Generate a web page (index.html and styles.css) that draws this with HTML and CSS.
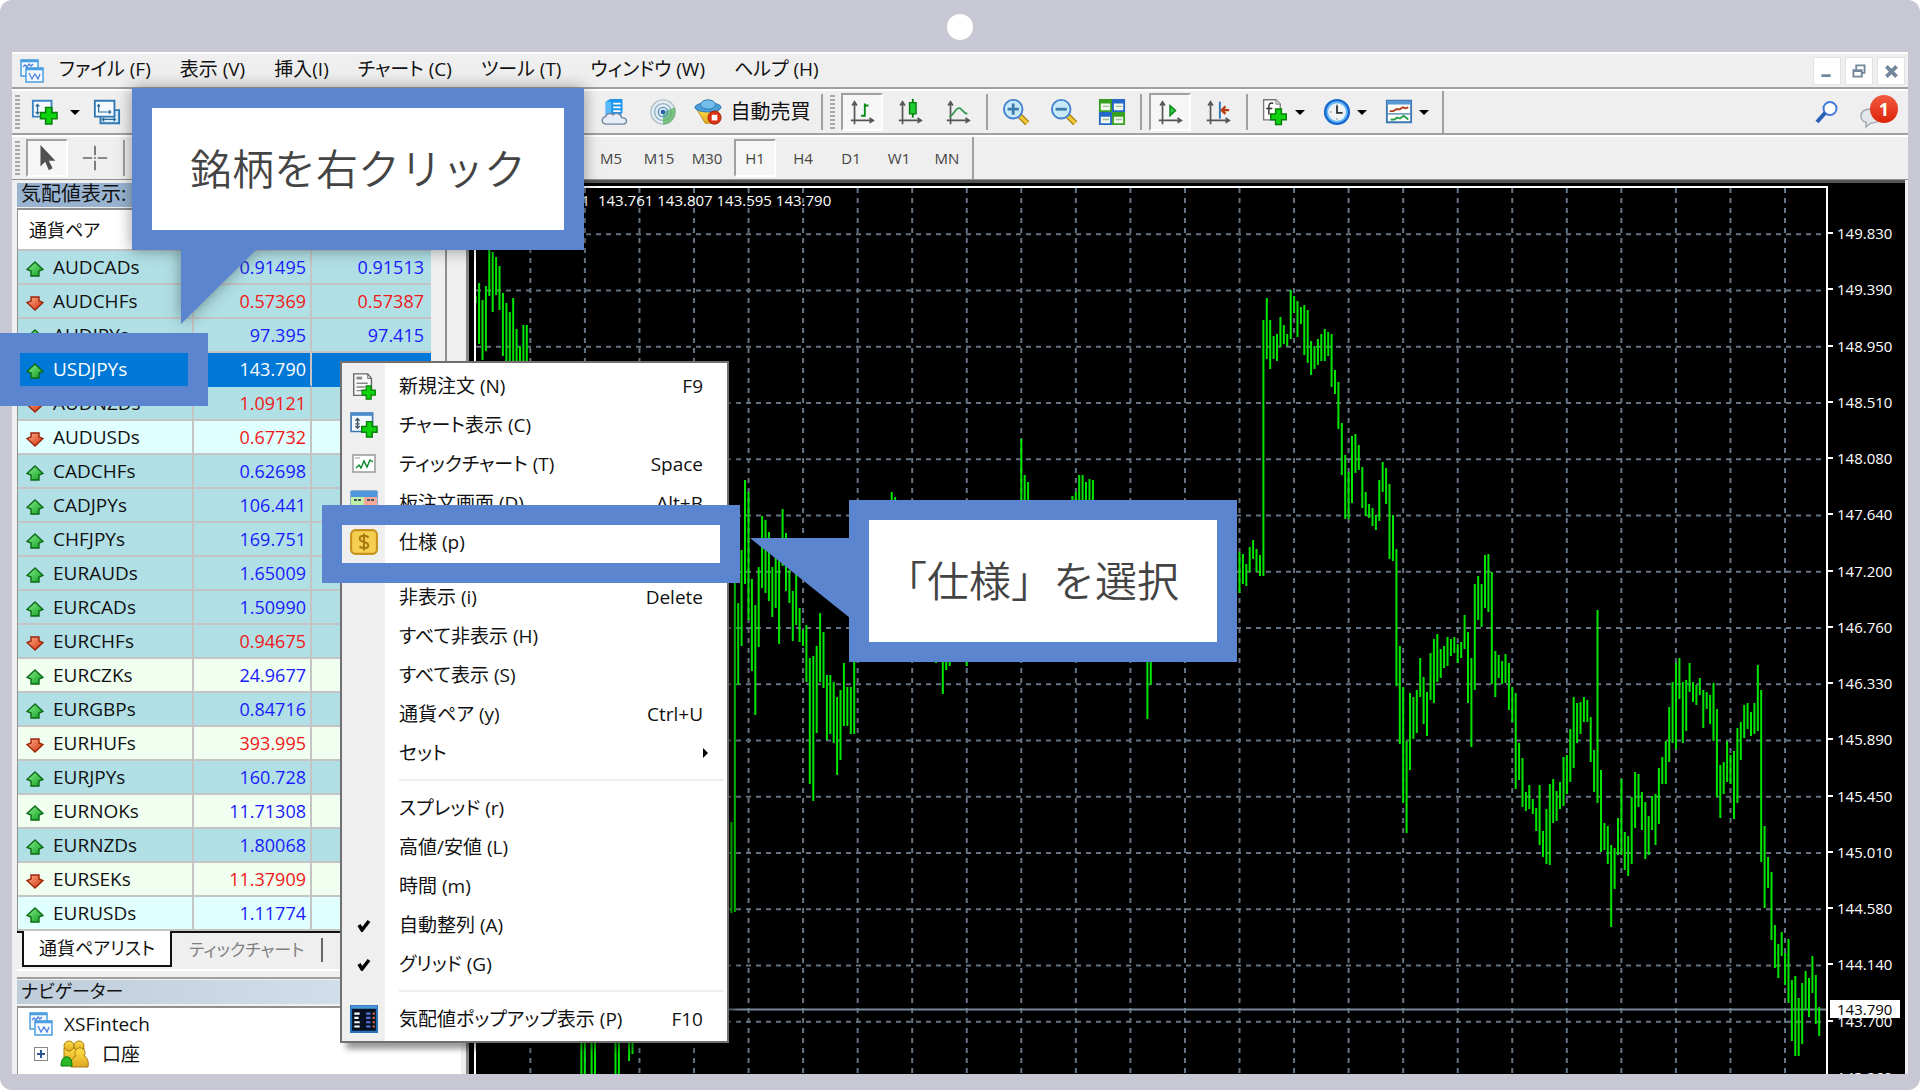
FILE: index.html
```html
<!DOCTYPE html>
<html lang="ja">
<head>
<meta charset="utf-8">
<title>XSFintech</title>
<link rel="stylesheet" href="styles.css">
</head>
<body>
<svg class="sprite" aria-hidden="true">
  <defs>
    <linearGradient id="g-green" x1="0" y1="0" x2="1" y2="1"><stop offset="0" stop-color="#8df08d"/><stop offset="1" stop-color="#0a9a1e"/></linearGradient>
    <linearGradient id="g-red" x1="0" y1="0" x2="1" y2="1"><stop offset="0" stop-color="#ffb08a"/><stop offset="1" stop-color="#cf2d08"/></linearGradient>
    <linearGradient id="g-gold" x1="0" y1="0" x2="0" y2="1"><stop offset="0" stop-color="#ffe04a"/><stop offset="1" stop-color="#e0a820"/></linearGradient>
  </defs>
  <symbol id="i-plus" viewBox="0 0 18 18"><path d="M6 1h6v5h5v6h-5v5H6v-5H1V6h5z" fill="#0fd40f" stroke="#078007" stroke-width="1.5"/></symbol>
  <symbol id="i-up" viewBox="0 0 18 18"><path d="M9 2l8 7.500-4 1.500v5H5v-5L1 9.500z" fill="url(#g-green)" stroke="#0b6a14" stroke-width="1.400"/></symbol>
  <symbol id="i-down" viewBox="0 0 18 18"><path d="M9 16L1 8.500l4-1.500V3h8v4l4 1.500z" fill="url(#g-red)" stroke="#9b2408" stroke-width="1.400"/></symbol>
  <symbol id="i-app" viewBox="0 0 26 26"><g fill="#f3f9ff" stroke="#4a9fe0" stroke-width="1.500"><path d="M2 2h17v16H2z"/><path d="M2 3h17" stroke-width="2.500"/><path d="M7 10h17v14H7z"/><path d="M7 11h17" stroke-width="2.500"/></g><path d="M4 9l2-2 2 2 2-3 2 2 2-2M10 15l3 6 3-5 3 5 2-5" fill="none" stroke="#4c7fe0" stroke-width="1.300"/></symbol>
  <symbol id="i-newchart" viewBox="0 0 30 30"><path d="M2 3h20v17H2z" fill="#f4faff" stroke="#3c84c4" stroke-width="2"/><path d="M7 7v10M5 9l2-2 2 2M5 15l2 2 2-2" fill="none" stroke="#2d6a94" stroke-width="1.400"/><use href="#i-plus" x="9" y="8" width="20" height="22"/></symbol>
  <symbol id="i-profiles" viewBox="0 0 30 30"><path d="M8 13h20v14H8z" fill="#d7ecfb" stroke="#3078b4" stroke-width="2"/><path d="M2 3h21v17H2z" fill="#f4faff" stroke="#3078b4" stroke-width="2"/><path d="M6 7v8h13M4.500 9L6 7l1.500 2M17 13l2 2-2 2M10 23h14M12 21l-2 2 2 2M22 21l2 2-2 2" fill="none" stroke="#2d6a94" stroke-width="1.300"/></symbol>
  <symbol id="i-server" viewBox="0 0 30 30"><path d="M5 4l5-3h13v15l-4 3H5z" fill="#1c94ee"/><path d="M5 4h6v15H5z" fill="#58bafc"/><path d="M13 6h8M13 10h8M13 14h8" stroke="#fff" stroke-width="2"/><path d="M6 28c-6 0-6-7-1-8 1-4 6-4 8-2 3-3 9-1 9 3 7 0 7 7 1 7z" fill="#e6edf6" stroke="#72859f" stroke-width="1.500"/></symbol>
  <symbol id="i-signal" viewBox="0 0 30 30"><circle cx="15" cy="15" r="13" fill="#e6edf0" stroke="#aebfca" stroke-width="1.500"/><circle cx="15" cy="15" r="9" fill="none" stroke="#8fb0c8" stroke-width="1.500"/><path d="M15 15l13-5c2 10-4 18-13 19z" fill="#62b768" opacity=".8"/><circle cx="15" cy="15" r="5" fill="none" stroke="#5693cc" stroke-width="1.500"/><circle cx="15" cy="15" r="2.500" fill="#235fb4"/></symbol>
  <symbol id="i-auto" viewBox="0 0 30 30"><path d="M3 12l9 15h7l8-15z" fill="url(#g-gold)" stroke="#b98818"/><ellipse cx="15" cy="10" rx="14" ry="5" fill="#4b9fd8" stroke="#2a74b0"/><ellipse cx="15" cy="7" rx="8" ry="5" fill="#77bfeb" stroke="#2a74b0"/><circle cx="22" cy="21" r="7" fill="#dd3312" stroke="#a61e06"/><path d="M19 18h6v6h-6z" fill="#fff"/></symbol>
  <symbol id="i-axes" viewBox="0 0 30 30"><path d="M7 4v24M3 24h24M4.500 8L7 4l2.500 4M23 21.500l4 2.500-4 2.500" fill="none" stroke="#555" stroke-width="1.800"/></symbol>
  <symbol id="i-bars" viewBox="0 0 30 30"><use href="#i-axes"/><path d="M18 6v14M18 8h4M14 19h4" stroke="#088a14" stroke-width="2" fill="none"/></symbol>
  <symbol id="i-candle" viewBox="0 0 30 30"><use href="#i-axes"/><path d="M18 1v20" stroke="#087c10" stroke-width="2"/><path d="M14.500 5h7v12h-7z" fill="#20cc30" stroke="#087c10" stroke-width="1.500"/></symbol>
  <symbol id="i-line" viewBox="0 0 30 30"><use href="#i-axes"/><path d="M6 20c5-2 7-11 11-9 3 2 4 5 8 6" stroke="#349850" stroke-width="2" fill="none"/></symbol>
  <symbol id="i-lens" viewBox="0 0 30 30"><path d="M18 18l9 9" stroke="#a87808" stroke-width="6"/><path d="M18 18l9 9" stroke="#f0c83c" stroke-width="3.500"/><circle cx="12" cy="12" r="10" fill="#c7e9fa" stroke="#4383cc" stroke-width="2"/></symbol>
  <symbol id="i-zoomin" viewBox="0 0 30 30"><use href="#i-lens"/><path d="M6 12h12M12 6v12" stroke="#3c7cac" stroke-width="3"/></symbol>
  <symbol id="i-zoomout" viewBox="0 0 30 30"><use href="#i-lens"/><path d="M6 12h12" stroke="#3c7cac" stroke-width="3"/></symbol>
  <symbol id="i-tiles" viewBox="0 0 30 30"><path d="M1 1h14v14H1zM15 15h14v14H15z" fill="#38a020"/><path d="M15 1h14v14H15zM1 15h14v14H1z" fill="#2468c8"/><path d="M3 6h10v7H3zM17 6h10v7H17zM3 20h10v7H3zM17 20h10v7H17z" fill="#f2f8f0"/><path d="M5 9h7M19 9h7M5 23h7M19 23h7" stroke="#9fc29c" stroke-width="1.500"/></symbol>
  <symbol id="i-scroll" viewBox="0 0 30 30"><use href="#i-axes"/><path d="M15 8l6 5.500-6 5.500z" fill="#34cc44" stroke="#08861a" stroke-width="1.500"/></symbol>
  <symbol id="i-shift" viewBox="0 0 30 30"><use href="#i-axes"/><path d="M17 4v18" stroke="#2c74b4" stroke-width="2"/><path d="M27 13h-8M23 9l-4 4 4 4" fill="none" stroke="#b83c14" stroke-width="2.500"/></symbol>
  <symbol id="i-func" viewBox="0 0 30 32"><path d="M2 2h14l5 5v18H2z" fill="#fff" stroke="#777" stroke-width="1.500"/><path d="M16 2v5h5" fill="#ddd" stroke="#777"/><path d="M13 6c-4-1-5 1-5 4v9M5 12h7" fill="none" stroke="#333" stroke-width="1.600"/><use href="#i-plus" x="9" y="11" width="20" height="21"/></symbol>
  <symbol id="i-clock" viewBox="0 0 30 30"><circle cx="15" cy="15" r="14" fill="#1768cc"/><circle cx="15" cy="15" r="11.500" fill="#68b8f8"/><circle cx="15" cy="15" r="9.500" fill="#eef3f6"/><path d="M15 8v8h6" stroke="#333" stroke-width="2" fill="none"/><path d="M15 7v1M8 15h1M15 22v1" stroke="#777" stroke-width="1.500"/></symbol>
  <symbol id="i-template" viewBox="0 0 30 30"><path d="M2 3h26v23H2z" fill="#fff" stroke="#3b78b4" stroke-width="2"/><path d="M2 5h26" stroke="#5a9ad4" stroke-width="4"/><path d="M2 17h26" stroke="#5a8ab4" stroke-width="1.500"/><path d="M5 14h4l3-2h4l3-2 3 1 3-1" fill="none" stroke="#b0401c" stroke-width="2"/><path d="M6 23h4l3-2 3 1 4-3 5 4" fill="none" stroke="#2ba04c" stroke-width="2"/></symbol>
  <symbol id="i-search" viewBox="0 0 24 24"><circle cx="15" cy="8.500" r="6.500" fill="#fff" stroke="#4078dc" stroke-width="2"/><path d="M10 13l-8 9" stroke="#2860b8" stroke-width="4"/></symbol>
  <symbol id="i-bubble" viewBox="0 0 24 24"><path d="M12 4C5 4 2 7 2 11c0 3 2 6 5 6l0 5 5-4c7 0 11-3 11-7S19 4 12 4z" fill="#e4e7ea" stroke="#a4a9b0" stroke-width="1.500"/></symbol>
  <symbol id="i-cursor" viewBox="0 0 20 30"><path d="M3 1v23l5-5 4 9 4-2-4-8h7z" fill="#505050"/></symbol>
  <symbol id="i-cross" viewBox="0 0 26 30"><path d="M13 2v10M13 18v10M0 15h10M16 15h10M12 15h2" stroke="#666" stroke-width="1.800"/></symbol>
  <symbol id="i-order" viewBox="0 0 26 30"><path d="M2 2h15l4 5v18H2z" fill="#fafafa" stroke="#666" stroke-width="1.500"/><path d="M17 2v5h4" fill="none" stroke="#666"/><path d="M5 5h6v3H5z" fill="#888"/><path d="M5 12h12M5 16h9M5 20h6" stroke="#888" stroke-width="1.500"/><use href="#i-plus" x="10" y="14" width="16" height="16"/></symbol>
  <symbol id="i-chart-add" viewBox="0 0 26 26"><path d="M1 2h20v17H1z" fill="#f4faff" stroke="#3c74b4" stroke-width="1.500"/><path d="M1 3h20" stroke="#4a8cd0" stroke-width="3"/><path d="M7 7v9M5 9l2-2 2 2M5 14l2 2 2-2M5 12h4" fill="none" stroke="#456" stroke-width="1.300"/><use href="#i-plus" x="10" y="9" width="16" height="16"/></symbol>
  <symbol id="i-tick" viewBox="0 0 28 24"><path d="M3 3h22v17H3z" fill="#fff" stroke="#999" stroke-width="1.500"/><path d="M5 6h5" stroke="#999"/><path d="M6 16l3-3 2 3 3-7 3 6 3-7 3 2" fill="none" stroke="#0b8a2a" stroke-width="1.400"/></symbol>
  <symbol id="i-depth" viewBox="0 0 28 26"><path d="M1 1h26v24H1z" fill="#fff" stroke="#2866b0"/><path d="M1 1h26v6H1z" fill="#4f97dc"/><path d="M1 7h13v18H1z" fill="#c0f0a8"/><path d="M14 7h13v18H14z" fill="#f8a898"/><path d="M4 10h7M17 10h7" stroke="#456" stroke-width="2" stroke-dasharray="3 1"/></symbol>
  <symbol id="i-spec" viewBox="0 0 26 26"><rect x="1" y="2" width="24" height="22" rx="4" fill="#f4cf50" stroke="#c89420" stroke-width="2"/><path d="M17 9c-1-2-8-3-8 1s8 2 8 6-7 3-8 1M13 5v16" fill="none" stroke="#a87810" stroke-width="1.800"/></symbol>
  <symbol id="i-popup" viewBox="0 0 26 26"><path d="M1 1h24v24H1z" fill="#061020" stroke="#2870b8" stroke-width="2"/><path d="M1 2h24" stroke="#4a98dc" stroke-width="3"/><path d="M4 8h5M4 12h4M4 16h5M4 20h5" stroke="#fff" stroke-width="2"/><path d="M15 8h4M15 12h4M15 16h4M15 20h4" stroke="#5a74e0" stroke-width="2"/><path d="M21 8h2M21 12h2M21 16h2M21 20h2" stroke="#e06848" stroke-width="2"/></symbol>
  <symbol id="i-check" viewBox="0 0 14 14"><path d="M2 7l3 5 7-9" fill="none" stroke="#000" stroke-width="3.500"/></symbol>
  <symbol id="i-accounts" viewBox="0 0 30 28"><g fill="url(#g-gold)" stroke="#a87c10"><path d="M4 8h20v14H4z"/><circle cx="9" cy="6" r="5"/><circle cx="19" cy="6" r="5"/><path d="M11 27c-1-6 2-10 5-11a5 5 0 1 1 8 0c3 1 5 5 4 11z"/></g><path d="M1 26c0-7 3-10 7-9 3 1 4 4 4 9z" fill="#28b828" stroke="#087808"/></symbol>
</svg>

<div class="frame">
  <span class="camera"></span>
  <main class="app">
    <nav class="menubar">
      <svg class="icon-26"><use href="#i-app"/></svg>
      <button class="menu-name">ファイル (F)</button>
      <button class="menu-name">表示 (V)</button>
      <button class="menu-name">挿入(I)</button>
      <button class="menu-name">チャート (C)</button>
      <button class="menu-name">ツール (T)</button>
      <button class="menu-name">ウィンドウ (W)</button>
      <button class="menu-name">ヘルプ (H)</button>
      <div class="window-buttons">
        <button aria-label="最小化"><svg viewBox="0 0 28 28"><path d="M8 19h10" stroke="#71879c" stroke-width="3"/></svg></button>
        <button aria-label="元に戻す"><svg viewBox="0 0 28 28"><path d="M11 12V8h9v8h-3" fill="none" stroke="#71879c" stroke-width="2"/><path d="M8 13h9v7H8zM8 14h9" fill="none" stroke="#71879c" stroke-width="2"/></svg></button>
        <button aria-label="閉じる"><svg viewBox="0 0 28 28"><path d="M9 9l11 11M20 9L9 20" stroke="#71879c" stroke-width="4"/></svg></button>
      </div>
    </nav>

    <div class="toolbar">
      <div class="group group-file">
        <span class="grip"></span>
        <button class="tool" aria-label="新規チャート"><svg><use href="#i-newchart"/></svg></button><span class="caret"></span>
        <button class="tool" aria-label="チャートの組表示"><svg><use href="#i-profiles"/></svg></button><span class="caret"></span>
      </div>
      <div class="group group-main">
        <button class="tool" aria-label="VPS"><svg><use href="#i-server"/></svg></button>
        <button class="tool" aria-label="シグナル"><svg><use href="#i-signal"/></svg></button>
        <button class="tool tool-wide"><svg><use href="#i-auto"/></svg>自動売買</button>
        <span class="sep"></span>
        <span class="grip"></span>
        <button class="tool pressed" aria-label="バーチャート"><svg><use href="#i-bars"/></svg></button>
        <button class="tool" aria-label="ローソク足"><svg><use href="#i-candle"/></svg></button>
        <button class="tool" aria-label="ラインチャート"><svg><use href="#i-line"/></svg></button>
        <span class="sep"></span>
        <button class="tool" aria-label="拡大"><svg><use href="#i-zoomin"/></svg></button>
        <button class="tool" aria-label="縮小"><svg><use href="#i-zoomout"/></svg></button>
        <button class="tool" aria-label="整列"><svg><use href="#i-tiles"/></svg></button>
        <span class="sep"></span>
        <button class="tool pressed" aria-label="自動スクロール"><svg><use href="#i-scroll"/></svg></button>
        <button class="tool" aria-label="チャートシフト"><svg><use href="#i-shift"/></svg></button>
        <span class="sep"></span>
        <button class="tool with-caret" aria-label="インディケータ"><svg><use href="#i-func"/></svg><span class="caret"></span></button>
        <button class="tool with-caret" aria-label="時間足設定"><svg><use href="#i-clock"/></svg><span class="caret"></span></button>
        <button class="tool with-caret" aria-label="定型チャート"><svg><use href="#i-template"/></svg><span class="caret"></span></button>
      </div>
      <div class="status">
        <button class="status-button" aria-label="検索"><svg class="icon-24"><use href="#i-search"/></svg></button>
        <button class="status-button" aria-label="お知らせ"><svg class="icon-24"><use href="#i-bubble"/></svg><span class="badge">1</span></button>
      </div>
    </div>

    <div class="toolbar timebar">
      <div class="group group-draw">
        <span class="grip"></span>
        <button class="tool pressed" aria-label="カーソル"><svg><use href="#i-cursor"/></svg></button>
        <button class="tool" aria-label="クロスヘア"><svg><use href="#i-cross"/></svg></button>
        <span class="sep"></span>
      </div>
      <div class="group group-time">
        <button class="tool">M5</button>
        <button class="tool">M15</button>
        <button class="tool">M30</button>
        <button class="tool pressed">H1</button>
        <button class="tool">H4</button>
        <button class="tool">D1</button>
        <button class="tool">W1</button>
        <button class="tool">MN</button>
      </div>
    </div>

    <div class="workspace">
      <aside class="side">
        <section class="market">
          <h2 class="panel-title title-active">気配値表示:</h2>
          <div class="market-body">
            <table class="quotes">
              <colgroup><col class="col-name"><col class="col-bid"><col class="col-ask"></colgroup>
              <thead><tr><th colspan="3">通貨ペア</th></tr></thead>
              <tbody>
                <tr><td><svg><use href="#i-up"/></svg>AUDCADs</td><td class="rise">0.91495</td><td class="rise">0.91513</td></tr>
                <tr><td><svg><use href="#i-down"/></svg>AUDCHFs</td><td class="fall">0.57369</td><td class="fall">0.57387</td></tr>
                <tr><td><svg><use href="#i-up"/></svg>AUDJPYs</td><td class="rise">97.395</td><td class="rise">97.415</td></tr>
                <tr class="selected"><td><svg><use href="#i-up"/></svg>USDJPYs</td><td>143.790</td><td></td></tr>
                <tr><td><svg><use href="#i-down"/></svg>AUDNZDs</td><td class="fall">1.09121</td><td></td></tr>
                <tr class="cyan"><td><svg><use href="#i-down"/></svg>AUDUSDs</td><td class="fall">0.67732</td><td></td></tr>
                <tr><td><svg><use href="#i-up"/></svg>CADCHFs</td><td class="rise">0.62698</td><td></td></tr>
                <tr><td><svg><use href="#i-up"/></svg>CADJPYs</td><td class="rise">106.441</td><td></td></tr>
                <tr><td><svg><use href="#i-up"/></svg>CHFJPYs</td><td class="rise">169.751</td><td></td></tr>
                <tr><td><svg><use href="#i-up"/></svg>EURAUDs</td><td class="rise">1.65009</td><td></td></tr>
                <tr><td><svg><use href="#i-up"/></svg>EURCADs</td><td class="rise">1.50990</td><td></td></tr>
                <tr><td><svg><use href="#i-down"/></svg>EURCHFs</td><td class="fall">0.94675</td><td></td></tr>
                <tr class="honey"><td><svg><use href="#i-up"/></svg>EURCZKs</td><td class="rise">24.9677</td><td></td></tr>
                <tr><td><svg><use href="#i-up"/></svg>EURGBPs</td><td class="rise">0.84716</td><td></td></tr>
                <tr class="honey"><td><svg><use href="#i-down"/></svg>EURHUFs</td><td class="fall">393.995</td><td></td></tr>
                <tr><td><svg><use href="#i-up"/></svg>EURJPYs</td><td class="rise">160.728</td><td></td></tr>
                <tr class="honey"><td><svg><use href="#i-up"/></svg>EURNOKs</td><td class="rise">11.71308</td><td></td></tr>
                <tr><td><svg><use href="#i-up"/></svg>EURNZDs</td><td class="rise">1.80068</td><td></td></tr>
                <tr class="honey"><td><svg><use href="#i-down"/></svg>EURSEKs</td><td class="fall">11.37909</td><td></td></tr>
                <tr class="cyan"><td><svg><use href="#i-up"/></svg>EURUSDs</td><td class="rise">1.11774</td><td></td></tr>
              </tbody>
            </table>
          </div>
          <div class="tabs">
            <button class="tab tab-active">通貨ペアリスト</button>
            <button class="tab">ティックチャート</button>
          </div>
        </section>
        <section class="navigator">
          <h2 class="panel-title">ナビゲーター</h2>
          <ul class="tree">
            <li class="root"><svg class="icon-26"><use href="#i-app"/></svg>XSFintech</li>
            <li class="branch"><span class="expander"></span><svg class="icon-30"><use href="#i-accounts"/></svg>口座</li>
            <li class="branch next"><span class="folder"></span></li>
          </ul>
        </section>
      </aside>

      <section class="chart">
        <div class="plot">
          <p class="ohlc">USDJPYs,H1&nbsp; 143.761 143.807 143.595 143.790</p>
          <svg id="plot" aria-label="USDJPYs H1"></svg>
        </div>
        <div class="axis">
          <ol class="prices">
            <li>149.830</li><li>149.390</li><li>148.950</li><li>148.510</li><li>148.080</li><li>147.640</li><li>147.200</li><li>146.760</li><li>146.330</li><li>145.890</li><li>145.450</li><li>145.010</li><li>144.580</li><li>144.140</li><li>143.700</li><li>143.260</li>
          </ol>
          <span class="last-price">143.790</span>
        </div>
      </section>
    </div>
  </main>

  <div class="context-menu">
    <button><svg><use href="#i-order"/></svg><span>新規注文 (N)</span><kbd>F9</kbd></button>
    <button><svg><use href="#i-chart-add"/></svg><span>チャート表示 (C)</span></button>
    <button><svg><use href="#i-tick"/></svg><span>ティックチャート (T)</span><kbd>Space</kbd></button>
    <button><svg><use href="#i-depth"/></svg><span>板注文画面 (D)</span><kbd>Alt+B</kbd></button>
    <button><svg><use href="#i-spec"/></svg><span>仕様 (p)</span></button>
    <hr>
    <button><i></i><span>非表示 (i)</span><kbd>Delete</kbd></button>
    <button><i></i><span>すべて非表示 (H)</span></button>
    <button><i></i><span>すべて表示 (S)</span></button>
    <button><i></i><span>通貨ペア (y)</span><kbd>Ctrl+U</kbd></button>
    <button><i></i><span>セット</span><b class="submenu"></b></button>
    <hr>
    <button><i></i><span>スプレッド (r)</span></button>
    <button><i></i><span>高値/安値 (L)</span></button>
    <button><i></i><span>時間 (m)</span></button>
    <button><svg class="check"><use href="#i-check"/></svg><span>自動整列 (A)</span></button>
    <button><svg class="check"><use href="#i-check"/></svg><span>グリッド (G)</span></button>
    <hr>
    <button><svg><use href="#i-popup"/></svg><span>気配値ポップアップ表示 (P)</span><kbd>F10</kbd></button>
  </div>

  <div class="highlight highlight-row"></div>
  <div class="highlight highlight-item"></div>
  <div class="callout callout-row"><p>銘柄を右クリック</p></div>
  <div class="callout callout-item"><p>「仕様」を選択</p></div>
</div>
<script src="chart.js"></script>
</body>
</html>
```
FILE: chart.js
```js
// Price bars: index of the first bar in a run, then "high-low" for each bar.
const runs = [
  [-224, '296-303 283-344 300-360 286-351 240-296 252-312 257-295 266-310 293-356 303-370 312-370 298-370 329-370 346-370 325-370 325-370'],
  [-193, '1030-1080 1030-1080'],
  [-190, '1030-1080 1030-1080'],
  [-183, '1030-1080 1030-1080'],
  [-179, '1030-1061 1030-1054'],
  [-149, '822-913 575-912 603-685 550-646 480-584 492-620 579-671 605-715 567-647 516-588 520-593 532-601 567-617 553-608 553-644 509-566 533-591 570-603 591-641 573-625 608-642 630-646 625-682 658-784 656-801 646-733 613-682 632-688 675-740 675-734 682-743 697-775 690-760 663-726 687-726 687-734 650-734'],
  [-102, '492-560 497-560'],
  [-89, '600-663'],
  [-87, '600-694 600-670 600-666'],
  [-80, '600-666'],
  [-64, '439-560 475-560 482-560'],
  [-49, '496-560 492-560 475-560 475-560 482-560 479-560 480-560'],
  [-27, '600-719 600-685'],
  [0, '552-593 554-584 564-586 547-572 540-559 549-572 555-576 320-576 298-359 320-369 336-359 334-361 317-347 325-344 334-346 290-339 ' +
    '296-313 301-337 307-324 305-355 310-363 341-375 346-369 339-365 334-361 329-361 332-356 334-387 370-394 382-429 423-475 455-519 ' +
    '472-519 436-503 434-473 445-470 467-508 492-516 504-518 508-526 515-530 480-521 462-492 468-504 484-559 515-561 549-686 646-744 ' +
    '687-803 741-833 693-770 697-739 690-733 658-697 677-724 692-736 653-700 639-703 634-682 649-678 646-668 637-666 639-656 637-653 ' +
    '644-663 642-658 615-649 632-703 658-747 584-690 576-620 584-627 555-608 554-612 572-684 651-697 655-678 661-684 654-683 663-710 ' +
    '687-722 693-789 743-780 758-807 792-811 785-809 799-814 808-831 785-845 831-857 809-864 784-865 779-823 791-821 782-809 757-806 ' +
    '755-794 729-782 697-768 703-743 702-734 697-722 700-722 717-762 750-792 610-803 770-852 823-850 826-864 845-927 848-889 818-855 ' +
    '779-855 832-870 836-876 797-864 772-828 774-807 792-830 802-859 816-855 796-830 794-845 768-824 757-784 741-784 707-762 682-743 ' +
    '663-749 658-699 682-743 680-731 663-692 682-702 685-705 678-695 690-728 692-709 695-724 683-741 709-797 765-818 762-794 741-782 ' +
    '755-784 751-819 728-803 722-760 705-738 703-729 712-736 703-734 665-731 690-862 826-908 857-888 872-940 925-968 944-978 932-956 ' +
    '953-985 939-1003 980-1041 976-1056 998-1056 983-1044 971-1010 978-1017 956-993 975-1024 1007-1036']
];
const RIGHT = 1826, TOP = 188, STEP = 3.41, ORIGIN = 1239.5;

function draw() {
  const svg = document.getElementById('plot');
  const w = svg.clientWidth, h = svg.clientHeight, left = RIGHT - w;
  // The newest bar stays at the right edge when the window is resized.
  svg.setAttribute('viewBox', `${left} ${TOP} ${w} ${h}`);
  let grid = '', bars = '';
  for (let x = 1785; x > left; x -= 54.55) grid += `M${x} ${TOP}V${TOP + h}`;
  for (let k = 0; k < 16; k++) grid += `M${left} ${234.3 + k * 56.24}H${RIGHT}`;
  for (const [start, list] of runs) {
    list.split(' ').forEach((range, n) => {
      const [high, low] = range.split('-');
      bars += `M${(ORIGIN + (start + n) * STEP).toFixed(1)} ${high}V${low}`;
    });
  }
  svg.innerHTML = `<path class="grid" d="${grid}"/><path class="bid" d="M${left} 1009.5H${RIGHT}"/><path class="bars" d="${bars}"/>`;
}
draw();
window.addEventListener('resize', draw);
```
FILE: styles.css
```css
* { box-sizing: border-box; }

body {
  margin: 0;
  background: #fff;
  color: #111;
  font: 18px/24px "Open Sans", "Noto Sans CJK JP", sans-serif;
  font-feature-settings: "palt";
}

button {
  padding: 0;
  border: 0;
  background: none;
  color: inherit;
  font: inherit;
  font-feature-settings: inherit;
}

h2, p, ul, ol { margin: 0; padding: 0; list-style: none; }
.sprite { position: absolute; width: 0; height: 0; }
.icon-24 { width: 24px; height: 24px; }
.icon-26 { width: 26px; height: 26px; }
.icon-30 { width: 30px; height: 28px; }

.frame {
  position: relative;
  display: flex;
  flex-direction: column;
  height: 100vh;
  padding: 14px 12px 16px;
  border-radius: 12px;
  background: #c8c7d4;
  overflow: hidden;
}

.camera {
  align-self: center;
  width: 26px;
  height: 26px;
  margin-bottom: 12px;
  border-radius: 50%;
  background: #fff;
}

.app {
  display: flex;
  flex: 1;
  flex-direction: column;
  min-height: 0;
  border-top: 2px solid #fff;
  background: #efefef;
  overflow: hidden;
}

/* Menu bar */
.menubar {
  display: flex;
  flex: none;
  align-items: center;
  gap: 29px;
  height: 35px;
  padding: 0 3px 0 7px;
  border-bottom: 2px solid #a0a0a0;
}
.menubar > .icon-26 { margin-right: -15px; }
.menu-name { padding-bottom: 4px; font-size: 19px; white-space: nowrap; }
.window-buttons { display: flex; gap: 4px; margin-left: auto; }
.window-buttons button { width: 28px; height: 28px; border: 1px solid #e2e2e2; background: #fff; }
.window-buttons svg { display: block; width: 26px; height: 26px; }

/* Toolbars */
.toolbar {
  display: flex;
  flex: none;
  height: 46px;
  padding-left: 3px;
  border-top: 2px solid #fff;
  border-bottom: 2px solid #a0a0a0;
}
.timebar { height: 44px; border-bottom: 0; }
.group { display: flex; flex: none; align-items: center; gap: 6px; }
.group-file { gap: 4px; width: 579px; }
.group-file .caret { margin-right: 2px; }
.group-draw { width: 575px; }
.group-main { padding-right: 7px; border-right: 2px solid #a0a0a0; }
.group-time { padding-right: 4px; border-right: 2px solid #a0a0a0; }
.grip {
  flex: none;
  width: 5px;
  height: 34px;
  background: repeating-linear-gradient(#a8a8a8 0 2px, #efefef 2px 4px);
}
.tool {
  display: flex;
  flex: none;
  align-items: center;
  justify-content: center;
  width: 42px;
  height: 38px;
  color: #444;
  font-size: 15px;
}
.tool svg { flex: none; width: 28px; height: 28px; }
.tool-wide { gap: 9px; width: 124px; color: #111; font-size: 20px; }
.with-caret { gap: 6px; width: 56px; }
.pressed {
  border: 2px solid #fff;
  border-top-color: #a0a0a0;
  border-left-color: #a0a0a0;
  background: #f6f6f6;
}
.sep { flex: none; width: 2px; height: 36px; margin: 0 1px; background: #a0a0a0; }
.caret {
  flex: none;
  border: 5px solid transparent;
  border-top-color: #000;
  border-bottom: 0;
}
.status { display: flex; align-items: flex-start; gap: 20px; margin: 8px 10px 0 auto; }
.status-button { position: relative; width: 24px; height: 30px; }
.status-button + .status-button { width: 39px; text-align: left; }
.status-button + .status-button .icon-24 { margin-top: 6px; }
.badge {
  position: absolute;
  top: -4px;
  right: 0;
  width: 28px;
  height: 28px;
  border-radius: 50%;
  background: linear-gradient(#f25a40, #dc2408);
  color: #fff;
  font-size: 18px;
  font-weight: 700;
  line-height: 28px;
  text-align: center;
}

/* Side panels */
.workspace { display: flex; flex: 1; min-height: 0; border-top: 1px solid #909090; }
.side {
  display: flex;
  flex: none;
  flex-direction: column;
  width: 457px;
  padding: 3px 0 0 5px;
  border-right: 3px solid #888;
}
.market { flex: none; width: 430px; border-right: 2px solid #909090; }
.panel-title {
  height: 24px;
  padding-left: 4px;
  background: linear-gradient(90deg, #bfcddb, #d7e4f2);
  font-size: 18px;
  font-weight: 400;
  line-height: 22px;
}
.title-active { background: #99b4d1; font-size: 20px; }
.market-body { margin-top: 1px; border-top: 2px solid #909090; border-left: 1px solid #909090; }
.quotes { width: 413px; border-spacing: 0; table-layout: fixed; }
.col-name { width: 176px; }
.col-bid { width: 118px; }
.quotes th {
  height: 41px;
  padding: 0 0 0 11px;
  border-bottom: 2px solid #c4c4c4;
  background: #fff;
  font-weight: 400;
  text-align: left;
}
.quotes td {
  height: 34px;
  padding: 0 4px 0 0;
  border-right: 2px solid #c4c4c4;
  border-bottom: 2px solid #c4c4c4;
  background: #b0e0e6;
  line-height: 24px;
  text-align: right;
}
.quotes td:last-child { padding-right: 7px; border-right: 0; }
.quotes td:first-child { padding-left: 8px; font-size: 19px; text-align: left; }
.quotes svg { width: 18px; height: 18px; margin-right: 9px; vertical-align: -4px; }
.quotes .cyan td { background: #e0ffff; }
.quotes .honey td { background: #f0fff0; }
.quotes .selected td { border-bottom-color: #0078d7; background: #0078d7; color: #fff; }
.rise { color: #1a1aff; }
.fall { color: #f01818; }
.tabs { display: flex; height: 40px; padding-left: 5px; border-top: 2px solid #111; border-bottom: 2px solid #fff; }
.tab { height: 36px; margin-top: -2px; padding: 0 17px; color: #808080; font-size: 17px; }
.tab:last-child { height: 24px; margin-top: 5px; border-right: 2px solid #666; line-height: 22px; }
.tab-active { width: 150px; padding: 0; border: 2px solid #111; border-top: 0; background: #fff; color: #111; font-size: 18px; }

.navigator { flex: 1; min-height: 0; margin: 6px 5px 0 0; border-top: 2px solid #a0a0a0; padding-top: 1px; }
.tree { height: 100%; margin-top: 2px; border-top: 2px solid #909090; border-left: 1px solid #909090; background: #fff; overflow: hidden; }
.tree li { display: flex; align-items: center; font-size: 19px; }
.root { gap: 10px; height: 32px; padding-left: 10px; }
.branch { gap: 12px; height: 28px; padding-left: 16px; }
.expander {
  width: 14px;
  height: 14px;
  border: 1px solid #888;
  background: linear-gradient(#2b5797, #2b5797) center / 8px 2px no-repeat, linear-gradient(#2b5797, #2b5797) center / 2px 8px no-repeat;
}
.next { align-items: flex-start; }
.folder { width: 24px; height: 10px; margin: 3px 0 0 30px; background: #dca828; }

/* Chart */
.chart {
  display: flex;
  flex: 1;
  min-width: 0;
  margin-right: 3px;
  padding: 3px 0 0 5px;
  border-top: 3px solid #555;
  background: #000;
  color: #fff;
  font-size: 15px;
  line-height: 18px;
}
.plot { position: relative; flex: 1; min-width: 0; border: 2px solid #fff; border-bottom: 0; }
.plot svg { display: block; width: 100%; height: 100%; }
.ohlc { position: absolute; top: 3px; left: 32px; white-space: nowrap; }
.grid, .bars, .bid { fill: none; stroke-width: 2; }
.grid { stroke: #778899; stroke-dasharray: 5 5; opacity: .85; }
.bid { stroke: #778899; }
.bars { stroke: #00e600; }
.axis { position: relative; flex: none; width: 77px; }
.prices { display: flex; flex-direction: column; justify-content: space-between; height: 862px; margin-top: 38px; }
.prices li { display: flex; align-items: center; gap: 4px; }
.prices li::before { width: 5px; height: 2px; background: #fff; content: ""; }
.last-price { position: absolute; top: 814px; left: 2px; width: 70px; padding-left: 7px; background: #fff; color: #000; }

/* Context menu */
.context-menu {
  position: absolute;
  top: 361px;
  left: 340px;
  display: flex;
  flex-direction: column;
  width: 389px;
  padding: 3px 5px 3px 0;
  border: 2px solid #707070;
  background: linear-gradient(90deg, #efefef 43px, #fff 43px);
  box-shadow: 6px 6px 6px rgba(0, 0, 0, .4);
}
.context-menu button {
  display: grid;
  grid-template-columns: 43px 1fr auto;
  align-items: center;
  height: 39px;
  padding-right: 19px;
  font-size: 19px;
  text-align: left;
}
.context-menu svg { justify-self: center; width: 28px; height: 28px; }
.context-menu .check { width: 14px; height: 14px; }
.context-menu span { padding-left: 14px; }
.context-menu kbd { font: inherit; }
.context-menu hr { width: 325px; height: 2px; margin: 7px 0 7px 57px; border: 0; background: #efefef; }
.submenu { margin-right: -8px; border: 5px solid transparent; border-right: 0; border-left-color: #000; }

/* Annotations */
.highlight, .callout { position: absolute; border: 20px solid #5b86cf; }
.highlight-row { top: 333px; left: 0; width: 208px; height: 73px; }
.highlight-item { top: 505px; left: 322px; width: 418px; height: 78px; }
.callout {
  display: flex;
  align-items: center;
  justify-content: center;
  height: 162px;
  padding-bottom: 5px;
  background: #fff;
  color: #444;
  font-family: "Noto Sans CJK JP", sans-serif;
  font-size: 42px;
  font-weight: 350;
  line-height: 60px;
  font-feature-settings: normal;
  white-space: nowrap;
}
.callout::after { position: absolute; background: #5b86cf; content: ""; }
.callout-row { top: 88px; left: 132px; width: 452px; filter: drop-shadow(0 0 8px rgba(0, 0, 0, .4)); }
.callout-row::after { top: 141px; left: 29px; width: 76px; height: 75px; clip-path: polygon(0 0, 100% 0, 0 100%); }
.callout-item { top: 500px; left: 849px; width: 388px; padding-right: 22px; }
.callout-item::after { top: 18px; left: -119px; width: 100px; height: 80px; clip-path: polygon(0 0, 100% 0, 100% 100%); }
```
